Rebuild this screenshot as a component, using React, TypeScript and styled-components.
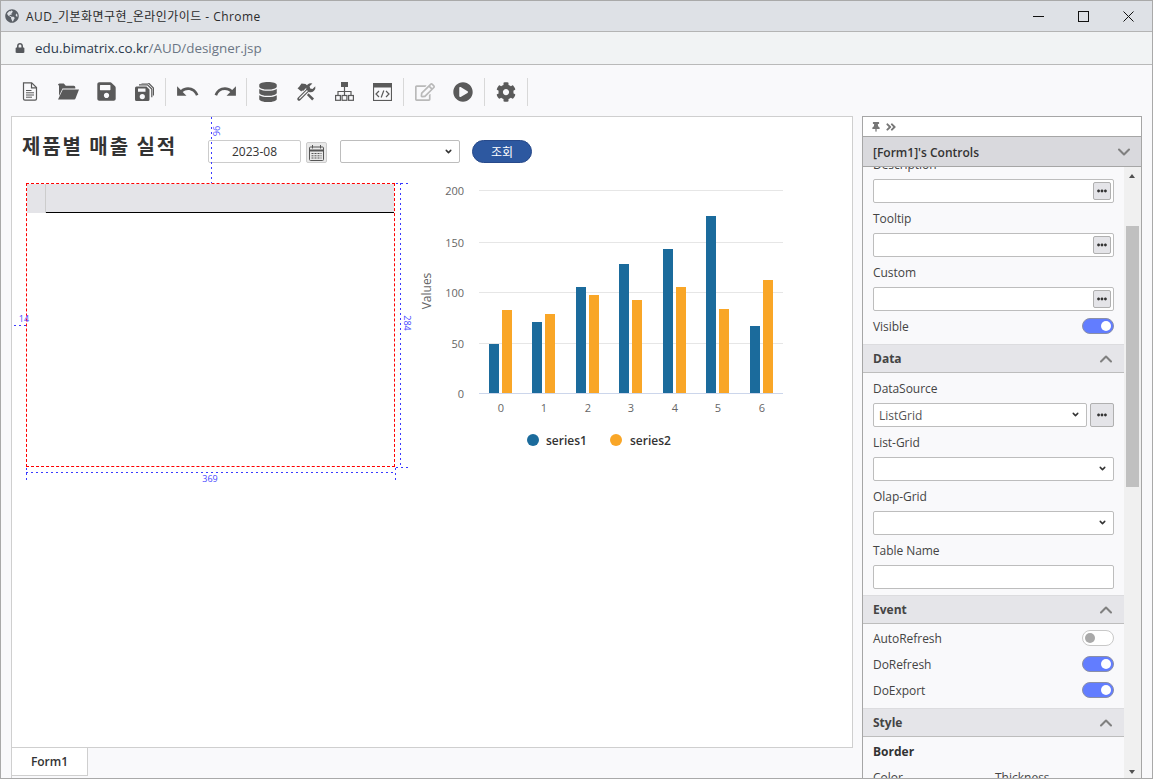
import styled, { createGlobalStyle } from "styled-components";
import { ChevronDown, ChevronUp } from "lucide-react";
import {
  FaCog,
  FaDatabase,
  FaEllipsisH,
  FaGlobeAmericas,
  FaLock,
  FaPlayCircle,
  FaRegEdit,
  FaSave,
  FaThumbtack,
  FaAngleDoubleRight,
} from "react-icons/fa";
import { MdRedo, MdUndo } from "react-icons/md";

const GlobalStyle = createGlobalStyle`
  html, body { margin: 0; padding: 0; overflow: hidden; }
  body { font-family: "Open Sans", "Noto Sans CJK KR", sans-serif; background: #f9f9fb; }
  * { box-sizing: border-box; }
`;

const Window = styled.div`
  width: 1153px;
  height: 779px;
  display: flex;
  flex-direction: column;
  border: 1px solid #a9a9a9;
  background: #f9f9fb;
  color: #333;
`;

const TitleBar = styled.div`
  height: 31px;
  flex: none;
  display: flex;
  align-items: center;
  padding-left: 4px;
  background: #dee1e6;
  border-bottom: 1px solid #b4b4b4;
  color: #2b2b2b;
  font-size: 12px;
  svg.globe { color: #5a5f66; font-size: 14px; margin-right: 7px; }
`;

const TitleText = styled.span`
  flex: 1;
  letter-spacing: 0.45px;
  font-family: "Open Sans", "Noto Sans CJK KR", sans-serif;
`;

const WindowControls = styled.div`
  display: flex;
  padding-right: 1px;
`;

const WindowControl = styled.div`
  width: 45px;
  height: 30px;
  display: flex;
  align-items: center;
  justify-content: center;
  svg { display: block; }
`;

const AddressBar = styled.div`
  height: 33px;
  flex: none;
  display: flex;
  align-items: center;
  padding-left: 14px;
  gap: 10px;
  background: #f1f3f4;
  border-bottom: 1px solid #b9b9b9;
  font-size: 13.4px;
  svg { color: #55585c; font-size: 10px; }
`;

const Host = styled.span`
  color: #2c3a4d;
`;

const UrlPath = styled.span`
  color: #6b7684;
`;

const Toolbar = styled.div`
  height: 51px;
  flex: none;
  display: flex;
  align-items: center;
  padding: 2px 0 0 10px;
`;

const ToolButton = styled.div<{ $muted?: boolean }>`
  width: 38px;
  height: 38px;
  display: flex;
  align-items: center;
  justify-content: center;
  color: ${(p) => (p.$muted ? "#b9b9b9" : "#5a5a5a")};
`;

const ToolDivider = styled.div`
  width: 1px;
  height: 28px;
  margin: 0 2px;
  background: #d8d8d8;
`;

const Workspace = styled.div`
  flex: 1;
  min-height: 0;
  display: flex;
  gap: 9px;
  padding: 0 10px;
`;

const DesignColumn = styled.div`
  width: 842px;
  display: flex;
  flex-direction: column;
`;

const Canvas = styled.div`
  position: relative;
  flex: 1;
  background: #fff;
  border: 1px solid #cfcfcf;
  overflow: hidden;
`;

const TabStrip = styled.div`
  height: 30px;
  flex: none;
  display: flex;
  border-left: 1px solid #cfcfcf;
`;

const Tab = styled.div`
  width: 76px;
  height: 29px;
  margin-top: -1px;
  display: flex;
  align-items: center;
  justify-content: center;
  background: #fff;
  border: 1px solid #cfcfcf;
  border-left: 0;
  font-size: 12px;
  font-weight: 600;
  color: #333;
`;

const ReportTitle = styled.div`
  position: absolute;
  left: 10px;
  top: 14px;
  font-family: "Noto Sans CJK KR", sans-serif;
  font-size: 20px;
  line-height: 30px;
  font-weight: 700;
  letter-spacing: 1.9px;
  color: #333;
`;

const DateInput = styled.input`
  position: absolute;
  left: 196px;
  top: 23px;
  width: 93px;
  height: 23px;
  border: 1px solid #ccc;
  border-radius: 2px;
  background: #fff;
  font-family: "Open Sans", sans-serif;
  font-size: 12px;
  color: #333;
  text-align: center;
  outline: none;
`;

const CalendarButton = styled.div`
  position: absolute;
  left: 294px;
  top: 25px;
  width: 21px;
  height: 21px;
  display: flex;
  align-items: center;
  justify-content: center;
  background: #e9e9e9;
  border: 1px solid #ccc;
  border-radius: 2px;
`;

const SelectBox = styled.div`
  position: relative;
  height: 24px;
  svg {
    position: absolute;
    right: 7px;
    top: 7px;
    color: #333;
    pointer-events: none;
  }
`;

const RowSelectBox = styled(SelectBox)`
  flex: 1;
  min-width: 0;
`;

const FilterBox = styled(SelectBox)`
  position: absolute;
  left: 328px;
  top: 23px;
  width: 120px;
  height: 23px;
`;

const NativeSelect = styled.select`
  display: block;
  width: 100%;
  height: 100%;
  padding: 0 5px;
  appearance: none;
  background: #fff;
  border: 1px solid #bdbdbd;
  border-radius: 2px;
  font-family: "Open Sans", sans-serif;
  font-size: 12px;
  color: #555;
  outline: none;
`;

const SearchButton = styled.button`
  position: absolute;
  left: 460px;
  top: 23px;
  width: 60px;
  height: 23px;
  padding: 0;
  border: 1px solid #27498a;
  border-radius: 12px;
  background: #2d58a0;
  color: #fff;
  font-family: "Noto Sans CJK KR", sans-serif;
  font-size: 12px;
`;

const GridFrame = styled.div`
  position: absolute;
  left: 14px;
  top: 66px;
  width: 369px;
  height: 284px;
  border: 1px dashed #f00;
`;

const GridHead = styled.div`
  height: 29px;
  display: flex;
  background: #e4e4e8;
  border-bottom: 1px solid #000;
`;

const GridCorner = styled.div`
  width: 19px;
  height: 29px;
  flex: none;
  background: #e4e4e8;
  border-right: 1px solid #ccc;
`;

const Guide = styled.div<{ $x: number; $y: number; $len: number; $vertical?: boolean }>`
  position: absolute;
  left: ${(p) => p.$x}px;
  top: ${(p) => p.$y}px;
  width: ${(p) => (p.$vertical ? 1 : p.$len)}px;
  height: ${(p) => (p.$vertical ? p.$len : 1)}px;
  background: repeating-linear-gradient(
    ${(p) => (p.$vertical ? "180deg" : "90deg")},
    #3a3aff 0 2px,
    transparent 2px 5px
  );
`;

const GuideLabel = styled.span<{ $x: number; $y: number; $rotate?: boolean }>`
  position: absolute;
  left: ${(p) => p.$x}px;
  top: ${(p) => p.$y}px;
  font-family: "Open Sans", sans-serif;
  font-size: 9px;
  line-height: 10px;
  color: #4a4aff;
  transform: ${(p) => (p.$rotate ? "translate(-50%, -50%) rotate(90deg)" : "translate(-50%, -50%)")};
`;

const ChartFigure = styled.svg`
  position: absolute;
  left: 398px;
  top: 63px;
  font-family: "Open Sans", sans-serif;
`;

const Panel = styled.aside`
  width: 280px;
  display: flex;
  flex-direction: column;
  border: 1px solid #a6a6a6;
  border-bottom: 0;
  background: #f9f9fb;
`;

const PanelPins = styled.div`
  height: 20px;
  flex: none;
  display: flex;
  align-items: center;
  gap: 4px;
  padding-left: 8px;
  background: #fff;
  border-bottom: 1px solid #a6a6a6;
  color: #777;
  font-size: 10px;
`;

const PanelHeader = styled.div`
  height: 30px;
  flex: none;
  display: flex;
  align-items: center;
  justify-content: space-between;
  padding: 1px 7px 0 10px;
  background: #d9d9dd;
  border-bottom: 1px solid #a6a6a6;
  font-size: 12px;
  font-weight: 600;
  color: #333;
  svg { color: #808080; }
`;

const PanelBody = styled.div`
  position: relative;
  flex: 1;
  min-height: 0;
  display: flex;
  overflow: hidden;
`;

const PropertyList = styled.div`
  width: 261px;
  flex: none;
  margin-top: -18px;
`;

const Group = styled.div<{ $top?: number; $pad?: number }>`
  padding: ${(p) => p.$top ?? 0}px 10px ${(p) => p.$pad ?? 0}px;
`;

const Field = styled.div`
  display: flex;
  flex-direction: column;
`;

const FieldLabel = styled.label`
  height: 30px;
  display: flex;
  align-items: center;
  font-size: 12px;
  letter-spacing: -0.05px;
  color: #444;
`;

const InputBox = styled.div`
  height: 24px;
  display: flex;
  align-items: center;
  background: #fff;
  border: 1px solid #bdbdbd;
  border-radius: 2px;
`;

const PlainInput = styled.input`
  flex: 1;
  min-width: 0;
  height: 100%;
  border: 0;
  padding: 0 5px;
  background: transparent;
  outline: none;
`;

const MoreButton = styled.div`
  width: 18px;
  height: 18px;
  margin-right: 2px;
  display: flex;
  align-items: center;
  justify-content: center;
  background: #e4e4e8;
  border: 1px solid #b0b0b0;
  border-radius: 2px;
  color: #333;
  font-size: 10px;
`;

const SelectRow = styled.div`
  display: flex;
  gap: 3px;
`;

const WideMore = styled(MoreButton)`
  width: 24px;
  height: 24px;
  margin: 0;
`;

const ToggleRow = styled.div`
  height: 26px;
  display: flex;
  align-items: center;
  justify-content: space-between;
  font-size: 12px;
  letter-spacing: -0.05px;
  color: #444;
`;

const VisibleRow = styled(ToggleRow)`
  margin-top: 2px;
`;

const ToggleTrack = styled.div<{ $on?: boolean }>`
  width: 32px;
  height: 16px;
  display: flex;
  align-items: center;
  justify-content: ${(p) => (p.$on ? "flex-end" : "flex-start")};
  padding: 0 2px;
  border-radius: 8px;
  background: ${(p) => (p.$on ? "#627dff" : "#fff")};
  border: 1px solid ${(p) => (p.$on ? "#8a8fa8" : "#c8c8c8")};
`;

const ToggleKnob = styled.div<{ $on?: boolean }>`
  width: 10px;
  height: 10px;
  border-radius: 50%;
  background: ${(p) => (p.$on ? "#fff" : "#a9a9a9")};
`;

const SectionHeader = styled.div`
  height: 29px;
  display: flex;
  align-items: center;
  justify-content: space-between;
  padding: 0 8px 0 10px;
  background: #e5e5e9;
  border-top: 1px solid #dcdcdf;
  border-bottom: 1px solid #bdbdbd;
  font-size: 12px;
  font-weight: 700;
  color: #444;
  svg { color: #808080; }
`;

const BoldLabel = styled.div`
  height: 28px;
  display: flex;
  align-items: center;
  font-size: 12px;
  font-weight: 700;
  color: #333;
`;

const TwoColumns = styled.div`
  display: grid;
  grid-template-columns: 122px 1fr;
  margin-top: 4px;
  font-size: 12px;
  color: #444;
`;

const ScrollTrack = styled.div`
  position: relative;
  flex: 1;
  background: #f0f0f0;
`;

const ScrollThumb = styled.div`
  position: absolute;
  left: 2px;
  right: 2px;
  top: 59px;
  height: 261px;
  background: #c0c0c0;
`;

const ArrowUp = styled.div`
  position: absolute;
  left: 5px;
  top: 7px;
  border: 3.5px solid transparent;
  border-top: 0;
  border-bottom: 4px solid #505050;
`;

const ArrowDown = styled.div`
  position: absolute;
  left: 5px;
  bottom: 4px;
  border: 3.5px solid transparent;
  border-bottom: 0;
  border-top: 4px solid #505050;
`;

const fileIcon = (
  <svg width="18" height="19" viewBox="0 0 18 19" fill="none" stroke="currentColor">
    <path d="M2.5.8h8.2l4.8 4.8v11.2q0 1.4-1.4 1.4H3.900q-1.400 0-1.400-1.400z" strokeWidth="1.200" />
    <path d="M10.500 1v4.800h5" strokeWidth="1.200" />
    <path d="M5 8.500h5.500M5 10.800h8M5 13h8M5 15.200h6" strokeWidth="1" />
  </svg>
);

const folderIcon = (
  <svg width="21" height="17" viewBox="0 0 21 17" fill="currentColor">
    <path d="M0 2q0-1.500 1.500-1.500h4.300l2 2.300h8q1.500 0 1.500 1.500v1.200H4.500L1 13V2.500z" />
    <path d="M4.800 6.600H21l-3.500 9q-.3.900-1.300.9H0z" />
  </svg>
);

const saveAllIcon = (
  <svg width="19" height="18" viewBox="0 0 19 18" fill="currentColor">
    <path d="M1.500 3.500h10l3 3v10q0 1.500-1.500 1.500H1.500Q0 18 0 16.500V5q0-1.500 1.500-1.500zM3 5.500v3.300h7.500V5.500zM7.300 11a2.600 2.600 0 1 0 0 5.200 2.600 2.600 0 0 0 0-5.200z" />
    <path d="M4 1.800h8.500l4.300 4.300v8.200M6.500 0h7l5 5v7.500" fill="none" stroke="currentColor" strokeWidth="1.200" />
  </svg>
);

const toolsIcon = (
  <svg width="20" height="20" viewBox="0 0 20 20" fill="currentColor">
    <path d="M5.500 1.500l4 .5 3 2.500-1.500 1.500-1 2.500-2.500.5-1-1-1.200 1.500L1.500 6.200 3 5z" />
    <path d="M7.500 6.500l10.500 10-1.800 2L6 8z" />
    <path d="M3 17l9-9" stroke="#f9f9fb" strokeWidth="5.500" strokeLinecap="round" />
    <path d="M3 17l9-9" stroke="currentColor" strokeWidth="3.500" strokeLinecap="round" />
    <path d="M3.300 16.700l8.700-8.700" stroke="#f9f9fb" strokeWidth="1.200" />
    <path d="M19.300 4.300l-2.800 2.800-2.300-.6-.6-2.300L16.400 1.400a4.800 4.800 0 0 0-6 6l2.500 2.500a4.800 4.800 0 0 0 6.400-5.600z" />
  </svg>
);

const sitemapIcon = (
  <svg width="19" height="19" viewBox="0 0 19 19" fill="none" stroke="currentColor">
    <rect x="6" y="0" width="7" height="5" fill="currentColor" stroke="none" />
    <path d="M9.500 5v8M3 13v-3.500h13V13" strokeWidth="1.200" />
    <rect x=".6" y="13.500" width="4.800" height="4.800" strokeWidth="1.200" />
    <rect x="7.100" y="13.500" width="4.800" height="4.800" strokeWidth="1.200" />
    <rect x="13.600" y="13.500" width="4.800" height="4.800" strokeWidth="1.200" />
  </svg>
);

const codeIcon = (
  <svg width="19" height="18" viewBox="0 0 19 18" fill="none" stroke="currentColor">
    <rect x=".5" y=".5" width="18" height="17" strokeWidth="1.200" />
    <rect x="0" y="0" width="19" height="4.500" fill="currentColor" stroke="none" />
    <path d="M6 8l-3 3 3 3M13 8l3 3-3 3M10.800 7.500l-2.600 7" strokeWidth="1.200" />
  </svg>
);

const calendarIcon = (
  <svg width="15" height="16" viewBox="0 0 15 16" fill="none" stroke="#555">
    <rect x=".5" y="2" width="14" height="13.500" rx="1" />
    <path d="M.5 5.500h14" strokeWidth="2" />
    <path d="M3.500 0v3.500M11.500 0v3.500" />
    <path d="M2.500 8.500h10M2.500 10.800h10M2.500 13h10" strokeDasharray="2 1" />
  </svg>
);

const ticks = [
  { label: "200", y: 10.500 },
  { label: "150", y: 62.500 },
  { label: "100", y: 112.500 },
  { label: "50", y: 163.500 },
  { label: "0", y: 213.500 },
];

const bars = [
  { x: 489, a: 344, b: 310 },
  { x: 532, a: 322, b: 314 },
  { x: 576, a: 287, b: 295 },
  { x: 619, a: 264, b: 300 },
  { x: 663, a: 249, b: 287 },
  { x: 706, a: 216, b: 309 },
  { x: 750, a: 326, b: 280 },
];

const CHART_X = 410;
const CHART_Y = 180;
const BASE = 393;

function Chart() {
  return (
    <ChartFigure width="390" height="290" viewBox="0 0 390 290">
      {ticks.map((t) => (
        <g key={t.label}>
          <line
            x1={479 - CHART_X}
            x2={783 - CHART_X}
            y1={t.y}
            y2={t.y}
            stroke={t.label === "0" ? "#ccd6eb" : "#e6e6e6"}
          />
          <text x={464 - CHART_X} y={t.y + 4} textAnchor="end" fontSize="11" fill="#666">
            {t.label}
          </text>
        </g>
      ))}
      {bars.map((b, i) => (
        <g key={b.x}>
          <rect x={b.x - CHART_X} y={b.a - CHART_Y} width="10" height={BASE - b.a} fill="#1b6b9c" />
          <rect x={b.x + 13 - CHART_X} y={b.b - CHART_Y} width="10" height={BASE - b.b} fill="#f9a627" />
          <text x={b.x + 12 - CHART_X} y={232} textAnchor="middle" fontSize="11" fill="#666">
            {i}
          </text>
        </g>
      ))}
      <text
        transform={`translate(${431 - CHART_X} 111) rotate(-90)`}
        textAnchor="middle"
        fontSize="12"
        fill="#666"
      >
        Values
      </text>
      <circle cx={533 - CHART_X} cy={260} r="6" fill="#1b6b9c" />
      <text x={546 - CHART_X} y={265} fontSize="12" fontWeight="600" fill="#333">
        series1
      </text>
      <circle cx={616 - CHART_X} cy={260} r="6" fill="#f9a627" />
      <text x={630 - CHART_X} y={265} fontSize="12" fontWeight="600" fill="#333">
        series2
      </text>
    </ChartFigure>
  );
}

const selectChevron = <ChevronDown size={9} strokeWidth={4} />;
const sectionChevron = <ChevronUp size={20} strokeWidth={2.5} />;

function TextField({ label, more }: { label: string; more?: boolean }) {
  return (
    <Field>
      <FieldLabel>{label}</FieldLabel>
      <InputBox>
        <PlainInput readOnly />
        {more && (
          <MoreButton>
            <FaEllipsisH />
          </MoreButton>
        )}
      </InputBox>
    </Field>
  );
}

function SelectField({ label }: { label: string }) {
  return (
    <Field>
      <FieldLabel>{label}</FieldLabel>
      <SelectBox>
        <NativeSelect />
        {selectChevron}
      </SelectBox>
    </Field>
  );
}

function Toggle({ label, on }: { label: string; on?: boolean }) {
  return (
    <ToggleRow>
      {label}
      <ToggleTrack $on={on}>
        <ToggleKnob $on={on} />
      </ToggleTrack>
    </ToggleRow>
  );
}

export default function App() {
  return (
    <Window>
      <GlobalStyle />
      <TitleBar>
        <FaGlobeAmericas className="globe" />
        <TitleText>AUD_기본화면구현_온라인가이드 - Chrome</TitleText>
        <WindowControls>
          <WindowControl>
            <svg width="11" height="11" viewBox="0 0 11 11" stroke="#111">
              <path d="M0 5.500h11" />
            </svg>
          </WindowControl>
          <WindowControl>
            <svg width="11" height="11" viewBox="0 0 11 11" fill="none" stroke="#111">
              <rect x=".5" y=".5" width="10" height="10" />
            </svg>
          </WindowControl>
          <WindowControl>
            <svg width="11" height="11" viewBox="0 0 11 11" stroke="#111">
              <path d="M.5.5l10 10M10.500.5l-10 10" />
            </svg>
          </WindowControl>
        </WindowControls>
      </TitleBar>
      <AddressBar>
        <FaLock />
        <div>
          <Host>edu.bimatrix.co.kr</Host>
          <UrlPath>/AUD/designer.jsp</UrlPath>
        </div>
      </AddressBar>
      <Toolbar>
        <ToolButton>{fileIcon}</ToolButton>
        <ToolButton>{folderIcon}</ToolButton>
        <ToolButton>
          <FaSave size={21} />
        </ToolButton>
        <ToolButton>{saveAllIcon}</ToolButton>
        <ToolDivider />
        <ToolButton>
          <MdUndo size={25} />
        </ToolButton>
        <ToolButton>
          <MdRedo size={25} />
        </ToolButton>
        <ToolDivider />
        <ToolButton>
          <FaDatabase size={20} />
        </ToolButton>
        <ToolButton>{toolsIcon}</ToolButton>
        <ToolButton>{sitemapIcon}</ToolButton>
        <ToolButton>{codeIcon}</ToolButton>
        <ToolDivider />
        <ToolButton $muted>
          <FaRegEdit size={20} />
        </ToolButton>
        <ToolButton>
          <FaPlayCircle size={20} />
        </ToolButton>
        <ToolDivider />
        <ToolButton>
          <FaCog size={20} />
        </ToolButton>
        <ToolDivider />
      </Toolbar>
      <Workspace>
        <DesignColumn>
          <Canvas>
            <ReportTitle>제품별 매출 실적</ReportTitle>
            <DateInput readOnly value="2023-08" />
            <CalendarButton>{calendarIcon}</CalendarButton>
            <FilterBox>
              <NativeSelect />
              {selectChevron}
            </FilterBox>
            <SearchButton>조회</SearchButton>
            <GridFrame>
              <GridHead>
                <GridCorner />
              </GridHead>
            </GridFrame>
            <Chart />
            <Guide $vertical $x={199} $y={0} $len={66} />
            <GuideLabel $rotate $x={204} $y={14}>96</GuideLabel>
            <Guide $x={2} $y={208} $len={12} />
            <GuideLabel $x={12} $y={202}>14</GuideLabel>
            <Guide $vertical $x={388} $y={66} $len={284} />
            <Guide $x={384} $y={66} $len={14} />
            <Guide $x={384} $y={350} $len={14} />
            <GuideLabel $rotate $x={395} $y={206}>284</GuideLabel>
            <Guide $x={14} $y={355} $len={369} />
            <Guide $vertical $x={14} $y={351} $len={14} />
            <Guide $vertical $x={383} $y={351} $len={14} />
            <GuideLabel $x={198} $y={362}>369</GuideLabel>
          </Canvas>
          <TabStrip>
            <Tab>Form1</Tab>
          </TabStrip>
        </DesignColumn>
        <Panel>
          <PanelPins>
            <FaThumbtack />
            <FaAngleDoubleRight size={12} />
          </PanelPins>
          <PanelHeader>
            [Form1]'s Controls
            <ChevronDown size={20} strokeWidth={2.5} />
          </PanelHeader>
          <PanelBody>
            <PropertyList>
              <Group $pad={5}>
                <TextField label="Description" more />
                <TextField label="Tooltip" more />
                <TextField label="Custom" more />
                <VisibleRow>
                  Visible
                  <ToggleTrack $on>
                    <ToggleKnob $on />
                  </ToggleTrack>
                </VisibleRow>
              </Group>
              <SectionHeader>
                Data
                {sectionChevron}
              </SectionHeader>
              <Group $pad={6}>
                <Field>
                  <FieldLabel>DataSource</FieldLabel>
                  <SelectRow>
                    <RowSelectBox>
                      <NativeSelect defaultValue="ListGrid">
                        <option>ListGrid</option>
                      </NativeSelect>
                      {selectChevron}
                    </RowSelectBox>
                    <WideMore>
                      <FaEllipsisH />
                    </WideMore>
                  </SelectRow>
                </Field>
                <SelectField label="List-Grid" />
                <SelectField label="Olap-Grid" />
                <TextField label="Table Name" />
              </Group>
              <SectionHeader>
                Event
                {sectionChevron}
              </SectionHeader>
              <Group $top={1} $pad={5}>
                <Toggle label="AutoRefresh" />
                <Toggle label="DoRefresh" on />
                <Toggle label="DoExport" on />
              </Group>
              <SectionHeader>
                Style
                {sectionChevron}
              </SectionHeader>
              <Group>
                <BoldLabel>Border</BoldLabel>
                <TwoColumns>
                  <span>Color</span>
                  <span>Thickness</span>
                </TwoColumns>
              </Group>
            </PropertyList>
            <ScrollTrack>
              <ScrollThumb />
              <ArrowUp />
              <ArrowDown />
            </ScrollTrack>
          </PanelBody>
        </Panel>
      </Workspace>
    </Window>
  );
}
